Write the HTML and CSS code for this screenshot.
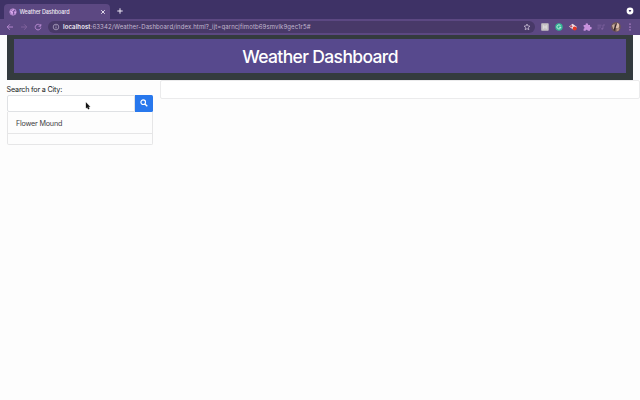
FILE: index.html
```html
<!DOCTYPE html>
<html lang="en">
<head>
<meta charset="utf-8">
<title>Weather Dashboard</title>
<link rel="stylesheet" href="styles.css">
</head>
<body>
<div class="tabs">
  <div class="tab">
    <svg class="globe" viewBox="0 0 8 8"><circle cx="4" cy="4" r="3.2" fill="#75519a" stroke="#d9a9ed" stroke-width=".7"/><path d="M1 3l2-.4 1-1.600 1.200.5-.6 1.300-1.300.5.8 1.100L3.500 7 2.200 5.500z M5 3.600l2-.2v1.400L5.600 6.300z" fill="#d9a9ed"/></svg>
    <span class="tab-title">Weather Dashboard</span>
    <svg class="close" viewBox="0 0 6 6"><path d="M1.200 1.200l3.600 3.600M4.800 1.200L1.200 4.800" stroke="#f0eaf6" stroke-width=".9"/></svg>
  </div>
  <svg class="plus" viewBox="0 0 6 6"><path d="M3 .3v5.400M.3 3h5.400" stroke="#f0eaf6" stroke-width="1"/></svg>
  <svg class="chev" viewBox="0 0 8 8"><circle cx="4" cy="4" r="3.400" fill="#fff"/><path d="M2.600 3.100h2.800L4 5.200z" fill="#35295c"/></svg>
</div>
<div class="bar">
  <div class="nav">
    <svg viewBox="0 0 8 8"><path d="M7 4H1.300M3.900 1.300L1.200 4l2.700 2.700" stroke="#c391da"/></svg>
    <svg viewBox="0 0 8 8"><path d="M1 4h5.700M4.100 1.300L6.800 4 4.100 6.700" stroke="#85669f"/></svg>
    <svg viewBox="0 0 8 8"><path d="M6.500 2.800A2.800 2.800 0 1 0 6.800 4.500M6.800 1v2.200H4.500" stroke="#c391da"/></svg>
  </div>
  <div class="address">
    <svg class="info" viewBox="0 0 8 8"><circle cx="4" cy="4" r="2.800" fill="none" stroke="#c5bad2" stroke-width=".65"/><path d="M4 3.500v2M4 2.300v.7" stroke="#c5bad2" stroke-width=".7"/></svg>
    <span class="url"><b>localhost</b>:63342/Weather-Dashboard/index.html?_ijt=qarncjfimotb69smvlk9gec1r5#</span>
    <svg class="star" viewBox="0 0 8 8"><path d="M4 1l.85 1.950 2.150.2-1.600 1.450.45 2.150L4 5.600 2.150 6.750l.45-2.150L1 3.150l2.150-.2z" fill="none" stroke="#d5cbdf" stroke-width=".7"/></svg>
  </div>
  <div class="extensions">
    <svg viewBox="0 0 10 10"><rect x="1.200" y="1.300" width="7.500" height="7.400" rx=".7" fill="#c5c1c4"/><path d="M3.700 3.200v3.600M6.200 3.200v3.600M3.700 5h2.500" stroke="#e9e6e9" stroke-width=".8"/></svg>
    <svg viewBox="0 0 10 10"><circle cx="5" cy="5" r="3.700" fill="#34b695"/><path d="M6.600 3.800A2 2 0 1 0 6.900 5.300H5.200" fill="none" stroke="#e1f7ef" stroke-width=".8"/></svg>
    <svg viewBox="0 0 10 10"><path d="M1 4.500L4.500 1.800 9 5 5.700 8z" fill="#efdce2"/><path d="M1.500 4.300L3.300 3l1.300 1.600-1.200 1z" fill="#b65269"/><circle cx="6.700" cy="6.400" r="2" fill="#e43624"/></svg>
    <svg viewBox="0 0 10 10"><path d="M1.600 3h2a1.300 1.300 0 1 1 2.500 0H8v2a1.200 1.200 0 1 1 0 2.200v1.500H5.800a1.200 1.200 0 0 0-2.300 0H1.600V6.800a1.200 1.200 0 0 0 0-2.300z" fill="#c791dc"/></svg>
    <svg viewBox="0 0 10 10"><path d="M1.500 3.200h4M1.500 5h3.500M1.500 6.800h2M7 6.800V3h2" fill="none" stroke="#7e629f" stroke-width=".8"/><circle cx="6.200" cy="6.800" r="1" fill="#7e629f"/></svg>
    <svg class="avatar" viewBox="0 0 10 10"><circle cx="5" cy="5" r="4.800" fill="#6f5653"/><ellipse cx="6" cy="3.800" rx="2.200" ry="2.700" fill="#dcbdad"/><path d="M1 3.500l2.400-1.800.6 3.500-1.500 2.300z" fill="#c8ad9e"/><path d="M4 3l1-2 1 .4-1.200 4-1.300 3.700-1-.8z" fill="#39282e"/><path d="M5.500 7L8.600 5.800 7.800 8.600 5.500 9.500z" fill="#b99783"/></svg>
    <svg class="menu" viewBox="0 0 4 10"><path d="M2 1.500v1.300M2 4.400v1.300M2 7.300v1.300" stroke="#c391da" stroke-width="1.200"/></svg>
  </div>
</div>
<header class="frame"><h1><span>Weather Dashboard</span></h1></header>
<main>
  <aside>
    <label for="city">Search for a City:</label>
    <div class="search">
      <input id="city" type="text">
      <button type="button" aria-label="Search"><svg viewBox="0 0 8 8"><circle cx="3.200" cy="3.200" r="2.300" fill="none" stroke="#fff" stroke-width="1.150"/><path d="M4.900 4.900l2.400 2.400" stroke="#fff" stroke-width="1.350"/></svg></button>
      <svg class="cursor" viewBox="0 0 6 8"><path d="M1 .6v5.600l1.200-1 .9 2 1.200-.5-.9-1.900h1.700z" fill="#111" stroke="#111" stroke-width=".3"/></svg>
    </div>
    <ul><li><span>Flower Mound</span></li><li></li></ul>
  </aside>
  <section class="card"></section>
</main>
</body>
</html>
```

FILE: styles.css
```css
* { box-sizing: border-box; }
body { margin: 0; height: 400px; overflow: hidden; background: #fdfdfd; font-family: Inter, "Liberation Sans", sans-serif; color: #24272a; }
svg { display: block; flex: none; }
.tabs { height: 19px; padding: 4px 6px 0 4px; display: flex; background: #3e3266; }
.tab { width: 106px; height: 15px; padding: 0 4px 0 4.500px; display: flex; align-items: center; border-radius: 4px 4px 0 0; background: #5c4882; color: #eee8f3; }
.globe { width: 8px; height: 8px; }
.tab-title { margin-left: 3px; font-size: 5.500px; font-weight: 500; line-height: 8px; letter-spacing: -.14px; white-space: nowrap; }
.close { width: 6px; height: 6px; margin-left: auto; }
.plus { width: 6px; height: 6px; margin: 4px 0 0 7px; }
.chev { width: 8px; height: 8px; margin: 3px 0 0 auto; }
.bar { height: 16px; display: flex; align-items: center; background: #5c4882; }
.nav { width: 48px; padding-left: 6px; display: flex; gap: 6.200px; }
.nav svg { width: 8px; height: 8px; fill: none; stroke-width: .85px; }
.address { width: 487px; height: 12px; padding: 0 4px; display: flex; align-items: center; border-radius: 6px; background: #483968; color: #c2b7cf; }
.info { width: 8px; height: 8px; }
.url { margin-left: 3px; font-size: 6px; line-height: 10px; letter-spacing: .115px; white-space: nowrap; }
.url b { font-weight: 600; color: #f2edf6; }
.star { width: 8px; height: 8px; margin-left: auto; }
.extensions { padding-left: 4.700px; display: flex; align-items: center; gap: 4.200px; }
.extensions svg { width: 10px; height: 10px; }
.extensions .menu { width: 4px; margin-left: 3px; }
.frame { height: 45px; margin: 0 7px; padding: 4px 7px 7px; background: #343b3e; }
h1 { height: 34px; margin: 0; padding-top: 1px; display: flex; align-items: center; justify-content: center; background: #57498d; color: #fff; font-size: 17.500px; font-weight: 500; line-height: 22px; letter-spacing: -.64px; white-space: nowrap; }
main { display: flex; align-items: flex-start; gap: 7px; padding-left: 7px; }
aside { width: 146px; padding-top: 4px; }
label { display: block; height: 11px; margin-left: -.4px; font-size: 7.200px; line-height: 11px; letter-spacing: -.2px; white-space: nowrap; color: #17191b; }
.search { position: relative; height: 16.500px; display: flex; }
input { width: 128px; height: 100%; padding: 0 6px; border: 1px solid #dfe1e4; border-radius: 2px 0 0 2px; background: #fff; font: inherit; }
button { width: 18.500px; height: 100%; padding: 0; display: flex; align-items: center; justify-content: center; border: 0; border-radius: 0 1.500px 1.500px 0; background: #2878ed; }
button svg { width: 8px; height: 8px; }
.cursor { position: absolute; left: 77.500px; top: 7px; width: 6px; height: 8px; }
ul { margin: 0; padding: 0; list-style: none; border: 1px solid #e6e6e7; border-top: 0; border-radius: 0 0 2px 2px; }
li { height: 22px; padding-left: 8px; font-size: 7.200px; line-height: 23px; letter-spacing: -.2px; color: #3d4044; border-bottom: 1px solid #e6e6e7; }
li:last-child { height: 10.500px; border-bottom: 0; }
.card { flex: 1; height: 19px; border: 1px solid #ebebec; border-radius: 2px; background: #fff; }
```
